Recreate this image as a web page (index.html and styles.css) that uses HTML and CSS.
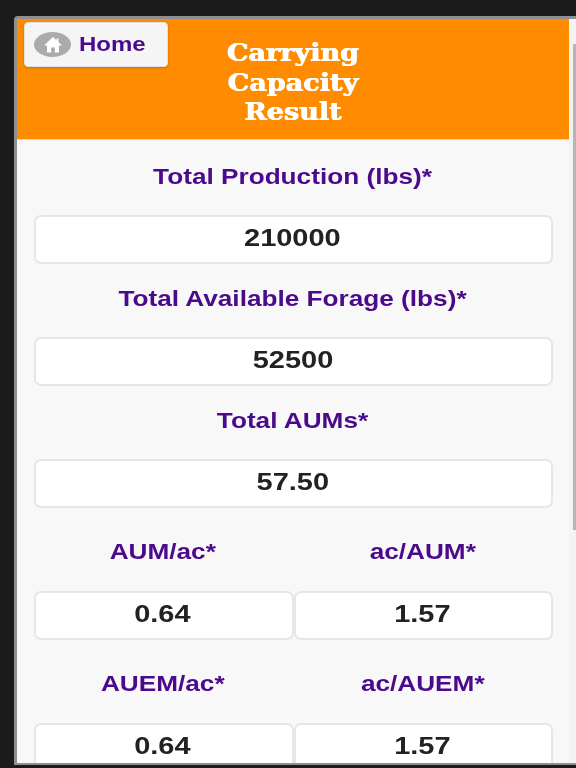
FILE: index.html
```html
<!DOCTYPE html>
<html>

<head>
    <meta charset="UTF-8">
    <title>Carrying Capacity Result</title>
    <link rel="stylesheet" href="styles.css">
</head>

<body>
    <div class="screen">
        <div class="page">
            <div class="header">
                <a class="home-button">
                    <span class="home-icon">
                        <svg width="20" height="18" viewBox="0 0 20 18">
                            <path d="M10 1 L13.5 4.2 V2.5 H15.5 V6 L19 9.5 H16 V16.5 H11.8 V11.5 H8.2 V16.5 H4 V9.5 H1 Z" fill="#fff" />
                        </svg>
                    </span>
                    <span class="home-text">Home</span>
                </a>
                <h1>Carrying<br>Capacity<br>Result</h1>
            </div>
            <div class="content">
                <label>Total Production (lbs)*</label>
                <div class="field"><span>210000</span></div>
                <label>Total Available Forage (lbs)*</label>
                <div class="field"><span>52500</span></div>
                <label>Total AUMs*</label>
                <div class="field"><span>57.50</span></div>
                <div class="columns">
                    <div class="column">
                        <label>AUM/ac*</label>
                        <div class="field"><span>0.64</span></div>
                    </div>
                    <div class="column">
                        <label>ac/AUM*</label>
                        <div class="field"><span>1.57</span></div>
                    </div>
                </div>
                <div class="columns">
                    <div class="column">
                        <label>AUEM/ac*</label>
                        <div class="field"><span>0.64</span></div>
                    </div>
                    <div class="column">
                        <label>ac/AUEM*</label>
                        <div class="field"><span>1.57</span></div>
                    </div>
                </div>
            </div>
        </div>
        <div class="scrollbar">
            <div class="scrollbar-thumb"></div>
        </div>
    </div>
</body>

</html>
```

FILE: styles.css
```css
html,
body {
    height: 768px;
    overflow: hidden;
}

body {
    margin: 0;
    padding: 16px 0 0 14px;
    box-sizing: border-box;
    background: #1b1b1b;
    font-family: "Liberation Sans", Arial, sans-serif;
}

.screen {
    display: flex;
    height: 749px;
    overflow: hidden;
    border-top: 3px solid #8f8f8f;
    border-left: 3px solid #8f8f8f;
    border-bottom: 2px solid #8f8f8f;
    border-top-left-radius: 4px;
    box-sizing: border-box;
    background: #f8f8f8;
    filter: blur(0.6px);
}

.page {
    width: 552px;
    flex: none;
}

.header {
    position: relative;
    height: 121px;
    box-sizing: border-box;
    padding-top: 20px;
    background: #ff8c00;
    border-bottom: 1px solid #d9d9d9;
}

.header h1 {
    margin: 0;
    font-family: "DejaVu Serif", serif;
    font-size: 23.5px;
    line-height: 29.5px;
    font-weight: 700;
    text-align: center;
    color: #fff;
    transform: scaleX(1.15);
    text-shadow: 0.4px 0 0 #fff, -0.4px 0 0 #fff;
}

.home-button {
    position: absolute;
    top: 3px;
    left: 7px;
    display: flex;
    align-items: center;
    gap: 8px;
    width: 144px;
    height: 45px;
    box-sizing: border-box;
    padding-left: 9px;
    background: #f5f5f5;
    border: 1px solid #e0e0e0;
    border-radius: 4px;
    box-shadow: 0 1px 3px rgba(0, 0, 0, 0.2);
    color: #4b0a8c;
    font-size: 20px;
    font-weight: 700;
}

.home-icon {
    display: flex;
    align-items: center;
    justify-content: center;
    width: 37px;
    height: 25px;
    border-radius: 50%;
    background: #ababab;
}

.home-text {
    transform: scaleX(1.2);
    transform-origin: left center;
}

.content {
    padding: 1px 16px 0 17px;
}

label {
    display: block;
    height: 74px;
    line-height: 71px;
    text-align: center;
    color: #4b0a8c;
    font-size: 22px;
    font-weight: 700;
    transform: translateX(-1px) scaleX(1.19);
}

.field {
    height: 49px;
    box-sizing: border-box;
    margin-bottom: -1px;
    background: #fff;
    border: 2px solid #e6e6e6;
    border-radius: 7px;
    line-height: 43px;
    text-align: center;
    color: #222;
    font-size: 23px;
    font-weight: 700;
}

.field span {
    display: inline-block;
    transform: translateX(-1px) scaleX(1.26);
}

.columns {
    display: flex;
}

.column {
    flex: 1;
}

.columns label {
    height: 84px;
    line-height: 90px;
}

.scrollbar {
    flex: 1;
    padding-top: 25px;
    display: flex;
    justify-content: flex-end;
    background: #f3f3f3;
}

.scrollbar-thumb {
    width: 3px;
    height: 486px;
    background: #b5b5b5;
}
```
